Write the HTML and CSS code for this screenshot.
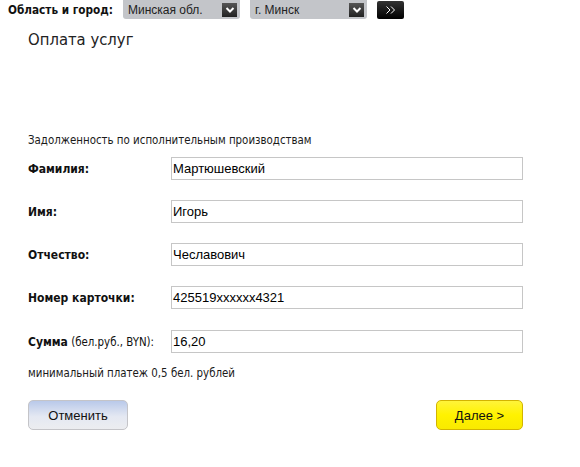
FILE: index.html
```html
<!DOCTYPE html>
<html lang="ru">
<head>
<meta charset="utf-8">
<title>Оплата услуг</title>
<link rel="stylesheet" href="styles.css">
</head>
<body>
<div class="topbar">
  <span class="region-label">Область и город:</span>
  <div class="select">
    <span class="select-text">Минская обл.</span>
    <span class="select-arrow"><svg width="10" height="8" viewBox="0 0 10 8"><path d="M1.5 2 L5 5.5 L8.5 2" fill="none" stroke="#fff" stroke-width="2"/></svg></span>
  </div>
  <div class="select">
    <span class="select-text">г. Минск</span>
    <span class="select-arrow"><svg width="10" height="8" viewBox="0 0 10 8"><path d="M1.5 2 L5 5.5 L8.5 2" fill="none" stroke="#fff" stroke-width="2"/></svg></span>
  </div>
  <div class="go-btn"><svg width="12" height="10" viewBox="0 0 12 10"><path d="M1.5 1.5 L5 5 L1.5 8.5 M6 1.5 L9.5 5 L6 8.5" fill="none" stroke="#fff" stroke-width="1"/></svg></div>
</div>

<main class="content">
  <h1 class="title">Оплата услуг</h1>
  <p class="desc">Задолженность по исполнительным производствам</p>

  <div class="form">
    <div class="row">
      <label class="label"><b>Фамилия:</b></label>
      <div class="input">Мартюшевский</div>
    </div>
    <div class="row">
      <label class="label"><b>Имя:</b></label>
      <div class="input">Игорь</div>
    </div>
    <div class="row">
      <label class="label"><b>Отчество:</b></label>
      <div class="input">Чеславович</div>
    </div>
    <div class="row">
      <label class="label"><b>Номер карточки:</b></label>
      <div class="input">425519xxxxxx4321</div>
    </div>
    <div class="row row-sum">
      <label class="label"><b>Сумма</b> (бел.руб., BYN):</label>
      <div class="input">16,20</div>
    </div>
  </div>

  <p class="note">минимальный платеж 0,5 бел. рублей</p>

  <div class="actions">
    <button class="btn btn-cancel">Отменить</button>
    <button class="btn btn-next">Далее &gt;</button>
  </div>
</main>
</body>
</html>
```
FILE: styles.css
```css
html, body {
  margin: 0;
  padding: 0;
  background: #fff;
}
body {
  font-family: "DejaVu Sans Condensed", "DejaVu Sans", sans-serif;
  font-size: 11.4px;
  color: #1a1a1a;
  width: 580px;
  height: 467px;
  overflow: hidden;
}
.topbar {
  display: flex;
  align-items: center;
  height: 19px;
  padding-left: 8px;
}
.region-label {
  font-weight: bold;
  font-size: 11.7px;
  color: #111;
  width: 115px;
}
.select {
  width: 117px;
  height: 19px;
  background: #c3c5c9;
  border-radius: 0 0 3px 3px;
  display: flex;
  align-items: center;
  justify-content: space-between;
  margin-right: 10px;
  box-sizing: border-box;
  padding: 0 3px 0 5px;
}
.select-text {
  font-family: "Liberation Sans", Arial, sans-serif;
  font-size: 12px;
  color: #222;
}
.select-arrow {
  width: 15px;
  height: 14px;
  background: linear-gradient(#555, #222);
  display: flex;
  align-items: center;
  justify-content: center;
}
.go-btn {
  width: 27px;
  height: 18px;
  background: linear-gradient(#333, #000);
  border-radius: 2px;
  display: flex;
  align-items: center;
  justify-content: center;
}
.content {
  padding-left: 28px;
  width: 495px;
}
.title {
  font-weight: normal;
  font-size: 16.5px;
  color: #222;
  margin: 11px 0 0 0;
  line-height: 20px;
}
.desc {
  margin: 83px 0 0 0;
  line-height: 14px;
}
.form {
  margin-top: 10px;
  display: flex;
  flex-direction: column;
  gap: 20px;
}
.row {
  display: flex;
  align-items: center;
  height: 23px;
}
.row-sum {
  margin-top: 1px;
}
.label {
  width: 143px;
  color: #111;
}
.label b {
  font-size: 12px;
}
.input {
  flex: 1;
  height: 23px;
  box-sizing: border-box;
  border: 1px solid #c6c6c6;
  font-family: "Liberation Sans", Arial, sans-serif;
  font-size: 13px;
  line-height: 21px;
  padding-left: 1px;
  color: #000;
}
.note {
  margin: 13px 0 0 0;
  line-height: 14px;
}
.actions {
  margin-top: 20px;
  display: flex;
  justify-content: space-between;
}
.btn {
  height: 30px;
  border-radius: 5px;
  font-family: "Liberation Sans", Arial, sans-serif;
  font-size: 13px;
  color: #111;
  padding: 0;
  cursor: pointer;
}
.btn-cancel {
  width: 100px;
  border: 1px solid #c4c4c8;
  background: linear-gradient(#b9c9ea, #e4e8f2 55%, #ecedf0);
}
.btn-next {
  width: 87px;
  border: 1px solid #d3b400;
  background: linear-gradient(#fff43a, #fff200 50%, #f9ea00);
}
```
